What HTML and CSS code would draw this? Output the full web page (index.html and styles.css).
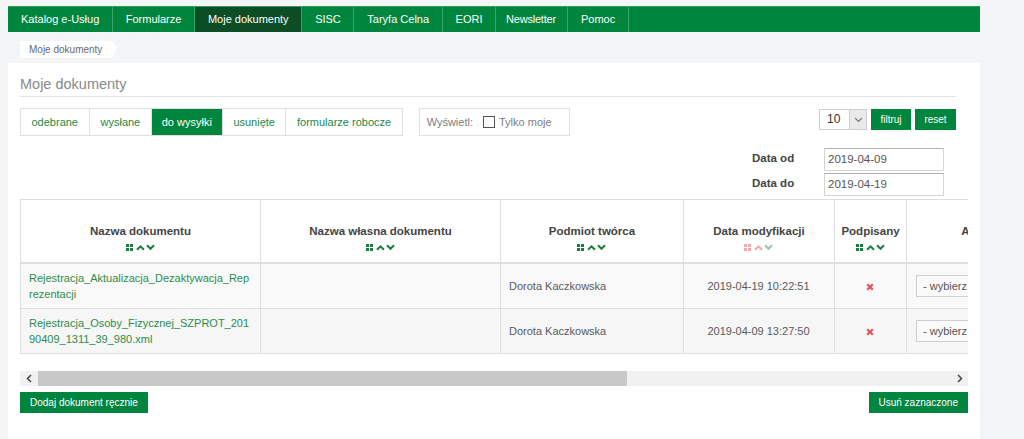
FILE: index.html
```html
<!DOCTYPE html>
<html lang="pl">
<head>
<meta charset="utf-8">
<title>Moje dokumenty</title>
<link rel="stylesheet" href="styles.css">
</head>
<body>
<div class="page">
  <nav class="topnav">
    <a class="nav-item">Katalog e-Usług</a>
    <a class="nav-item">Formularze</a>
    <a class="nav-item active">Moje dokumenty</a>
    <a class="nav-item">SISC</a>
    <a class="nav-item">Taryfa Celna</a>
    <a class="nav-item">EORI</a>
    <a class="nav-item tight">Newsletter</a>
    <a class="nav-item">Pomoc</a>
  </nav>
  <div class="crumbs"><span class="crumb">Moje dokumenty</span></div>
  <main class="panel">
    <h1 class="title">Moje dokumenty</h1>
    <div class="toolbar">
      <div class="tabs">
        <a class="tab">odebrane</a>
        <a class="tab">wysłane</a>
        <a class="tab active">do wysyłki</a>
        <a class="tab">usunięte</a>
        <a class="tab">formularze robocze</a>
      </div>
      <div class="show-box">
        <span class="show-label">Wyświetl:</span>
        <span class="check"></span>
        <span class="show-text">Tylko moje</span>
      </div>
      <div class="controls">
        <div class="select">
          <span class="select-val">10</span>
          <span class="select-arrow"><svg width="9" height="6" viewBox="0 0 9 6"><path d="M1 1 L4.5 4.5 L8 1" fill="none" stroke="#777" stroke-width="1.1"/></svg></span>
        </div>
        <a class="btn small">filtruj</a>
        <a class="btn small">reset</a>
      </div>
    </div>
    <div class="dates">
      <div class="date-grid">
        <span class="date-label">Data od</span><span class="date-input">2019-04-09</span>
        <span class="date-label">Data do</span><span class="date-input">2019-04-19</span>
      </div>
    </div>
    <div class="table-scroll">
      <table class="docs">
        <colgroup>
          <col class="c-name"><col class="c-own"><col class="c-author"><col class="c-date"><col class="c-signed"><col class="c-actions">
        </colgroup>
        <thead>
          <tr>
            <th><div class="th-title">Nazwa dokumentu</div><div class="sort"><svg width="30" height="7" viewBox="0 0 30 7"><g fill="#1b7d3f"><rect x="0" y="0" width="3" height="3"/><rect x="4" y="0" width="3" height="3"/><rect x="0" y="4" width="3" height="3"/><rect x="4" y="4" width="3" height="3"/></g><path d="M11 5.8 L14.5 2.3 L18 5.8" fill="none" stroke="#1b7d3f" stroke-width="2"/><path d="M21 1.3 L24.5 4.8 L28 1.3" fill="none" stroke="#1b7d3f" stroke-width="2"/></svg></div></th>
            <th><div class="th-title">Nazwa własna dokumentu</div><div class="sort"><svg width="30" height="7" viewBox="0 0 30 7"><g fill="#1b7d3f"><rect x="0" y="0" width="3" height="3"/><rect x="4" y="0" width="3" height="3"/><rect x="0" y="4" width="3" height="3"/><rect x="4" y="4" width="3" height="3"/></g><path d="M11 5.8 L14.5 2.3 L18 5.8" fill="none" stroke="#1b7d3f" stroke-width="2"/><path d="M21 1.3 L24.5 4.8 L28 1.3" fill="none" stroke="#1b7d3f" stroke-width="2"/></svg></div></th>
            <th><div class="th-title">Podmiot twórca</div><div class="sort"><svg width="30" height="7" viewBox="0 0 30 7"><g fill="#1b7d3f"><rect x="0" y="0" width="3" height="3"/><rect x="4" y="0" width="3" height="3"/><rect x="0" y="4" width="3" height="3"/><rect x="4" y="4" width="3" height="3"/></g><path d="M11 5.8 L14.5 2.3 L18 5.8" fill="none" stroke="#1b7d3f" stroke-width="2"/><path d="M21 1.3 L24.5 4.8 L28 1.3" fill="none" stroke="#1b7d3f" stroke-width="2"/></svg></div></th>
            <th><div class="th-title">Data modyfikacji</div><div class="sort"><svg width="30" height="7" viewBox="0 0 30 7"><g fill="#f4a9b0"><rect x="0" y="0" width="3" height="3"/><rect x="4" y="0" width="3" height="3"/><rect x="0" y="4" width="3" height="3"/><rect x="4" y="4" width="3" height="3"/></g><path d="M11 5.8 L14.5 2.3 L18 5.8" fill="none" stroke="#f4a9b0" stroke-width="2"/><path d="M21 1.3 L24.5 4.8 L28 1.3" fill="none" stroke="#9cc6ae" stroke-width="2"/></svg></div></th>
            <th><div class="th-title">Podpisany</div><div class="sort"><svg width="30" height="7" viewBox="0 0 30 7"><g fill="#1b7d3f"><rect x="0" y="0" width="3" height="3"/><rect x="4" y="0" width="3" height="3"/><rect x="0" y="4" width="3" height="3"/><rect x="4" y="4" width="3" height="3"/></g><path d="M11 5.8 L14.5 2.3 L18 5.8" fill="none" stroke="#1b7d3f" stroke-width="2"/><path d="M21 1.3 L24.5 4.8 L28 1.3" fill="none" stroke="#1b7d3f" stroke-width="2"/></svg></div></th>
            <th class="th-actions"><div class="th-title">Akcje</div></th>
          </tr>
        </thead>
        <tbody>
          <tr class="odd">
            <td class="name"><a>Rejestracja_Aktualizacja_Dezaktywacja_Reprezentacji</a></td>
            <td></td>
            <td>Dorota Kaczkowska</td>
            <td class="center">2019-04-19 10:22:51</td>
            <td class="center"><svg class="xmark" width="8" height="8" viewBox="0 0 8 8"><path d="M1.2 1.2 L6.8 6.8 M6.8 1.2 L1.2 6.8" stroke="#e8505e" stroke-width="2.2"/></svg></td>
            <td class="act"><span class="pick">- wybierz -</span></td>
          </tr>
          <tr class="even">
            <td class="name"><a>Rejestracja_Osoby_Fizycznej_SZPROT_20190409_1311_39_980.xml</a></td>
            <td></td>
            <td>Dorota Kaczkowska</td>
            <td class="center">2019-04-09 13:27:50</td>
            <td class="center"><svg class="xmark" width="8" height="8" viewBox="0 0 8 8"><path d="M1.2 1.2 L6.8 6.8 M6.8 1.2 L1.2 6.8" stroke="#e8505e" stroke-width="2.2"/></svg></td>
            <td class="act"><span class="pick">- wybierz -</span></td>
          </tr>
        </tbody>
      </table>
    </div>
    <div class="hscroll">
      <span class="hs-btn"><svg width="6" height="9" viewBox="0 0 6 9"><path d="M5 1 L1.5 4.5 L5 8" fill="none" stroke="#444" stroke-width="1.5"/></svg></span>
      <span class="hs-thumb"></span>
      <span class="hs-track"></span>
      <span class="hs-btn"><svg width="6" height="9" viewBox="0 0 6 9"><path d="M1 1 L4.5 4.5 L1 8" fill="none" stroke="#444" stroke-width="1.5"/></svg></span>
    </div>
    <div class="actions">
      <a class="btn">Dodaj dokument ręcznie</a>
      <a class="btn">Usuń zaznaczone</a>
    </div>
  </main>
</div>
</body>
</html>
```

FILE: styles.css
```css
* { box-sizing: border-box; }

html, body {
  margin: 0;
  padding: 0;
  background: #f4f5f7;
  font-family: "Liberation Sans", Arial, sans-serif;
  color: #555;
}

.page {
  width: 972px;
  margin-left: 8px;
  padding-top: 6px;
}

/* top navigation */
.topnav {
  display: flex;
  height: 26px;
  background: #00853e;
  border-top: 1px solid #2f9b5c;
}

.nav-item {
  display: block;
  padding: 0 12.5px 0 13px;
  line-height: 25px;
  font-size: 11px;
  color: #fff;
  border-right: 1px solid #3aa567;
  text-decoration: none;
  white-space: nowrap;
}

.nav-item.tight {
  padding: 0 11px 0 10px;
  letter-spacing: -0.2px;
}

.nav-item.active {
  background: #0c4d26;
}

/* breadcrumb */
.crumbs {
  padding: 7px 0 7px 12px;
  height: 31px;
}

.crumb {
  position: relative;
  display: inline-block;
  height: 17px;
  line-height: 17px;
  padding: 0 10px 0 9px;
  background: #fff;
  font-size: 10px;
  color: #6a6a6a;
}

.crumb::after {
  content: "";
  position: absolute;
  right: -5px;
  top: 0;
  border-left: 5px solid #fff;
  border-top: 8.5px solid transparent;
  border-bottom: 8.5px solid transparent;
}

/* panel */
.panel {
  background: #fff;
  padding: 11px 12px 0 12px;
  min-height: 376px;
}

.title {
  margin: 0 12px 0 0;
  font-size: 14.5px;
  font-weight: normal;
  line-height: 20px;
  color: #8a8a8a;
  padding-bottom: 2px;
  border-bottom: 1px solid #e3e3e3;
}

.toolbar {
  display: flex;
  align-items: flex-start;
  margin: 11px 12px 0 0;
  height: 28px;
}

.tabs {
  display: flex;
  border: 1px solid #e0e0e0;
  height: 28px;
}

.tab {
  padding: 0 10.5px;
  line-height: 26px;
  font-size: 11px;
  color: #22894a;
  border-right: 1px solid #e0e0e0;
  white-space: nowrap;
}

.tab:nth-child(1) { padding: 0 11px 0 10.5px; }
.tab.active { padding: 0 10px; }
.tab:last-child { border-right: 0; padding: 0 10.5px; }

.tab.active {
  background: #00853e;
  color: #fff;
}

.show-box {
  display: flex;
  align-items: center;
  margin-left: 16px;
  width: 151px;
  height: 28px;
  border: 1px solid #e0e0e0;
  padding: 0 7px;
  font-size: 11px;
  color: #7d7d7d;
}

.check {
  display: inline-block;
  width: 12px;
  height: 12px;
  border: 1px solid #555;
  margin: 0 4px 0 10px;
  background: #fff;
}

.controls {
  display: flex;
  margin-left: auto;
  margin-top: 1px;
  gap: 4px;
}

.select {
  display: flex;
  width: 48px;
  height: 21px;
  border: 1px solid #cfcfcf;
  background: #fff;
}

.select-val {
  flex: 1;
  padding-left: 7px;
  line-height: 19px;
  font-size: 12px;
  color: #333;
}

.select-arrow {
  width: 17px;
  display: flex;
  align-items: center;
  justify-content: center;
  background: #e9e9e9;
  border-left: 1px solid #cfcfcf;
}

.btn {
  display: inline-block;
  height: 21px;
  line-height: 21px;
  padding: 0 10px;
  background: #00853e;
  color: #fff;
  font-size: 10px;
  white-space: nowrap;
}

.btn.small {
  padding: 0;
  width: 40px;
  text-align: center;
}

.btn.small:last-child { width: 41px; }

/* dates */
.dates {
  display: flex;
  justify-content: flex-end;
  margin-top: 12px;
  padding-right: 24px;
}

.date-grid {
  display: grid;
  grid-template-columns: 72px 120px;
  row-gap: 2px;
  align-items: center;
}

.date-label {
  font-size: 11.5px;
  font-weight: bold;
  color: #444;
  margin-top: -4px;
}

.date-input {
  height: 23px;
  line-height: 21px;
  border: 1px solid #d4d4d4;
  border-top-color: #b0b0b0;
  padding: 0 3px;
  font-size: 11.5px;
  color: #555;
  background: #fff;
}

/* table */
.table-scroll {
  margin-top: 3px;
  width: 948px;
  overflow: hidden;
}

.docs {
  border-collapse: collapse;
  table-layout: fixed;
  width: 1026px;
}

.c-name { width: 240px; }
.c-own { width: 240px; }
.c-author { width: 183px; }
.c-date { width: 151px; }
.c-signed { width: 72px; }
.c-actions { width: 140px; }

.docs th {
  border: 1px solid #dedede;
  border-bottom: 2px solid #dedede;
  padding: 23px 4px 10px;
  height: 63px;
  vertical-align: top;
  text-align: center;
  background: #fff;
}

.th-title {
  font-size: 11.5px;
  font-weight: bold;
  color: #444;
  line-height: 16px;
  white-space: nowrap;
}

.sort {
  height: 7px;
  margin-top: 5px;
  line-height: 0;
}

.docs td {
  border: 1px solid #dedede;
  padding: 6px 9px 6px 8px;
  height: 45px;
  font-size: 11px;
  line-height: 16px;
  color: #5a5a5a;
  vertical-align: middle;
}

.docs tr.odd td { background: #f9f9f9; }
.docs tr.even td { background: #f6f6f6; }

.docs td.name a {
  color: #2a8d4d;
  word-break: break-all;
}

.docs td.center { text-align: center; }

.xmark { vertical-align: middle; }

.docs td.act { padding-left: 9px; }

.pick {
  display: block;
  width: 120px;
  height: 22px;
  line-height: 20px;
  border: 1px solid #cfcfcf;
  background: #fafafa;
  padding-left: 6px;
  font-size: 11px;
  color: #555;
}

/* fake horizontal scrollbar */
.hscroll {
  display: flex;
  width: 948px;
  height: 15px;
  margin-top: 17px;
  background: #f1f1f1;
}

.hs-btn {
  width: 17px;
  display: flex;
  align-items: center;
  justify-content: center;
}

.hs-thumb {
  width: 589px;
  margin-left: 1px;
  background: #c8c8c8;
}

.hs-track { flex: 1; }

.actions {
  display: flex;
  justify-content: space-between;
  width: 948px;
  margin-top: 6px;
}
```
